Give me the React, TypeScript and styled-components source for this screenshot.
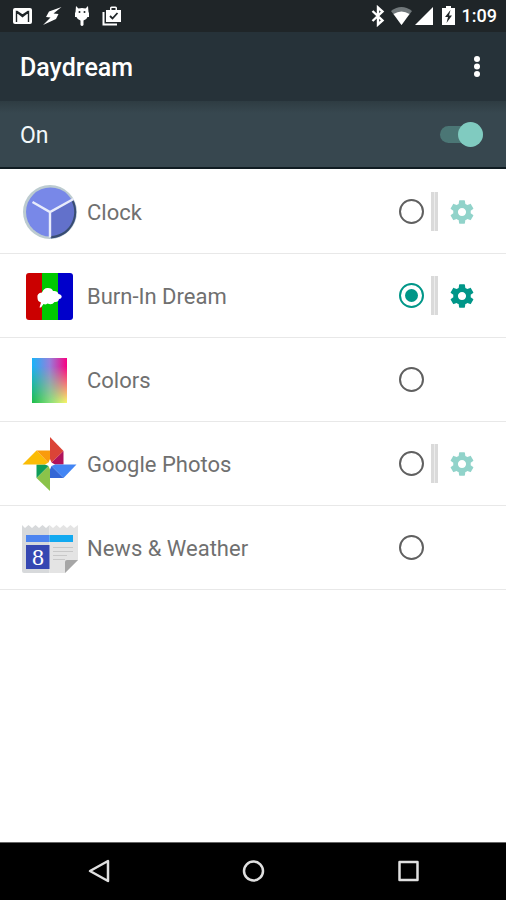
import React, { useState } from "react";
import styled, { createGlobalStyle } from "styled-components";

const GlobalStyle = createGlobalStyle`
  *, *::before, *::after { box-sizing: border-box; }
  body { margin: 0; background: #fff; font-family: Roboto, "Liberation Sans", sans-serif; }
`;

const Screen = styled.div`
  display: flex;
  flex-direction: column;
  min-height: 100vh;
`;

const StatusBar = styled.div`
  display: flex;
  align-items: center;
  justify-content: space-between;
  height: 32px;
  padding: 0 9px 0 12px;
  background: #1f2528;
  color: #fff;
`;

const StatusGroup = styled.div<{ $gap: number }>`
  display: flex;
  align-items: center;
  gap: ${(p) => p.$gap}px;
  svg { display: block; }
`;

const Time = styled.time`
  font-size: 18px;
  line-height: 20px;
  font-weight: 500;
`;

const Header = styled.header`
  display: flex;
  align-items: center;
  justify-content: space-between;
  height: 69px;
  padding: 2px 17px 0 20px;
  background: #263239;
  color: #fff;
`;

const Title = styled.h1`
  margin: 0;
  font-size: 25px;
  line-height: 32px;
  font-weight: 500;
`;

const IconButton = styled.button<{ $color?: string }>`
  display: flex;
  align-items: center;
  justify-content: center;
  padding: 0;
  border: 0;
  background: none;
  color: ${(p) => p.$color ?? "#fff"};
  cursor: pointer;
`;

const MasterRow = styled.label`
  display: flex;
  align-items: center;
  justify-content: space-between;
  height: 68px;
  padding: 0 23px 0 20px;
  border-bottom: 2px solid #101c22;
  background: linear-gradient(#2e3c42, #37474f 12px);
  color: #f2f8fa;
  font-size: 23px;
  line-height: 28px;
`;

const LabelText = styled.span`
  padding-top: 4px;
`;

const Switch = styled.input`
  appearance: none;
  display: grid;
  align-items: center;
  width: 43px;
  height: 25px;
  margin: 0;
  cursor: pointer;
  &::before, &::after {
    content: "";
    grid-area: 1 / 1;
  }
  &::before {
    width: 100%;
    height: 17px;
    border-radius: 9px;
    background: #4b7675;
  }
  &::after {
    justify-self: end;
    width: 25px;
    height: 25px;
    border-radius: 50%;
    background: #80cbc0;
  }
  &:not(:checked)::after { justify-self: start; background: #b9c1c4; }
`;

const List = styled.ul`
  flex: 1;
  margin: 0;
  padding: 1px 0 0;
  list-style: none;
`;

const Row = styled.li`
  display: flex;
  align-items: center;
  height: 84px;
  padding: 0 22px;
  border-bottom: 1px solid #e8e8e8;
`;

const DreamLabel = styled.label`
  flex: 1;
  display: flex;
  align-items: center;
  gap: 9px;
  color: #707070;
  font-size: 22px;
  line-height: 28px;
  svg { display: block; flex: none; }
`;

const DreamName = styled.span`
  padding-top: 2px;
`;

const Radio = styled.input`
  appearance: none;
  display: grid;
  place-items: center;
  width: 25px;
  height: 25px;
  margin: 0;
  border: 2px solid #606060;
  border-radius: 50%;
  cursor: pointer;
  &:checked { border-color: #009688; }
  &:checked::before {
    content: "";
    width: 13px;
    height: 13px;
    border-radius: 50%;
    background: #009688;
  }
`;

const Extras = styled.div`
  display: flex;
  align-items: center;
  gap: 10px;
  width: 60px;
  padding-left: 7px;
`;

const Divider = styled.span`
  width: 7px;
  height: 39px;
  border: solid #dadada;
  border-width: 0 3px;
  background: #ececec;
`;

const NavBar = styled.nav`
  display: grid;
  grid-template-columns: repeat(3, 1fr);
  height: 58px;
  padding: 0 21px 1px;
  border-top: 1px solid #666;
  background: #000;
`;

const ClockIcon = () => (
  <svg width="56" height="56" viewBox="0 0 56 56" aria-hidden="true">
    <circle cx="28" cy="28" r="27" fill="#bccbd0" />
    <circle cx="28.5" cy="28" r="24.5" fill="#7888e8" />
    <path d="M28 28 51 15.500A26 26 0 0 1 28 54Z" fill="#6271cb" />
    <path d="M51 15.500A26.500 26.500 0 0 1 29 54.500L29 52A24 24 0 0 0 50 18Z" fill="#384d70" />
    <path d="M10.500 18 28 28 51.500 15M28 27.500v26" fill="none" stroke="#e8ecfb" strokeWidth="2.400" />
  </svg>
);

const BurnIcon = () => (
  <svg width="56" height="56" viewBox="0 0 56 56" aria-hidden="true">
    <clipPath id="burn"><rect x="4" y="5" width="47" height="47" rx="3" /></clipPath>
    <g clipPath="url(#burn)">
      <path fill="#cb0000" d="M4 5h16v47H4z" />
      <path fill="#00c800" d="M20 5h16v47H20z" />
      <path fill="#0000cb" d="M36 5h15v47H36z" />
    </g>
    <path fill="#fff" d="M17.500 39.500 19 34.500Q15.500 33.500 15.500 30 14.500 25 20 24.500 22 19.500 26 20 30 20 31 23 35.500 22.500 36.500 26 40.500 27 39.500 29.500 38.500 31 37 31 36.500 34.500 32.500 34 30 37.500 25.500 35.500 23.500 37 21.500 36L19 39.500z" />
  </svg>
);

const ColorsIcon = () => (
  <svg width="56" height="56" viewBox="0 0 56 56" aria-hidden="true">
    <defs>
      <linearGradient id="top"><stop offset="0" stopColor="#18b4f8" /><stop offset=".5" stopColor="#9480dc" /><stop offset="1" stopColor="#fa0082" /></linearGradient>
      <linearGradient id="bottom"><stop offset="0" stopColor="#1cbc48" /><stop offset=".5" stopColor="#84e078" /><stop offset="1" stopColor="#f8f868" /></linearGradient>
      <linearGradient id="fade" x1="0" y1="0" x2="0" y2="1"><stop offset=".2" stopColor="#000" /><stop offset="1" stopColor="#fff" /></linearGradient>
      <mask id="lower"><rect x="10" y="5" width="35" height="46" fill="url(#fade)" /></mask>
    </defs>
    <rect x="10" y="6" width="35" height="45" fill="url(#top)" />
    <rect x="10" y="6" width="35" height="45" fill="url(#bottom)" mask="url(#lower)" />
  </svg>
);

const PhotosIcon = () => (
  <svg width="56" height="56" viewBox="0 0 56 56" aria-hidden="true">
    <path fill="#db4437" d="M28 1 41.500 15 28 28z" />
    <path fill="#b0125b" d="M41.500 15v13.500H28V28z" />
    <path fill="#4285f4" d="M54.500 28.500 41.500 42 28 28.500z" />
    <path fill="#3367d6" d="M41.500 42H28V28.500z" />
    <path fill="#8bc34a" d="M28 55 14.500 42 28 28.500z" />
    <path fill="#0f9d58" d="M14.500 42V28.500H28z" />
    <path fill="#fbbc05" d="M.5 28.500 14.500 14.500 28 28.500z" />
    <path fill="#f99b0c" d="M14.500 14.500H28v14z" />
    <path fill="#fff" d="m28 23 1.500 3.500 3.500 2-3.500 1.500-1.500 3.500-1.500-3.500-3.500-1.500 3.500-2z" />
  </svg>
);

const NewsIcon = () => (
  <svg width="56" height="56" viewBox="0 0 56 56" aria-hidden="true">
    <path fill="#d7d9db" d="M0 5l3 3 3.500-3L10 8l3.500-3L17 8l3.500-3L24 8l3.500-3v48H2q-2 0-2-2z" />
    <path fill="#e4e4e4" d="M27.500 5 31 8l3.500-3L38 8l3.500-3L45 8l3.500-3L52 8l4-3v35L43 53H27.500z" />
    <path fill="#4c84f0" d="M4 15h23.500v7H4z" />
    <path fill="#12a9f0" d="M27.500 15H51v7H27.500z" />
    <path fill="#3547b2" d="M4 25h23.500v24H4z" />
    <path stroke="#c8c8c8" d="M31 27.500h20M31 31.500h20M31 35.500h14M31 39.500h12" />
    <path fill="#a6a6a6" d="M43 53V42q0-2 2-2h11z" />
    <text x="16" y="45" fill="#fff" fontFamily="Liberation Serif, serif" fontSize="24" textAnchor="middle">8</text>
  </svg>
);

const Gear = () => (
  <svg width="28" height="28" viewBox="0 0 24 24" fill="currentColor" aria-hidden="true">
    <path d="M19.430 12.980c.04-.32.07-.64.07-.98s-.03-.66-.07-.98l2.110-1.650c.19-.15.24-.42.12-.64l-2-3.460c-.12-.22-.39-.3-.61-.22l-2.490 1c-.52-.4-1.080-.73-1.690-.98l-.38-2.650A.488.488 0 0 0 14 2h-4c-.25 0-.46.18-.49.42l-.38 2.650c-.61.25-1.170.59-1.690.98l-2.490-1c-.23-.09-.49 0-.61.22l-2 3.460c-.13.22-.07.49.12.64l2.110 1.650c-.04.32-.07.65-.07.98s.03.66.07.98l-2.110 1.650c-.19.15-.24.42-.12.64l2 3.460c.12.22.39.3.61.22l2.490-1c.52.4 1.080.73 1.690.98l.38 2.650c.03.24.24.42.49.42h4c.25 0 .46-.18.49-.42l.38-2.650c.61-.25 1.170-.59 1.690-.98l2.490 1c.23.09.49 0 .61-.22l2-3.460c.12-.22.07-.49-.12-.64zM12 15.500c-1.930 0-3.500-1.570-3.500-3.500s1.570-3.500 3.500-3.500 3.500 1.570 3.500 3.500-1.570 3.500-3.500 3.500z" />
  </svg>
);

const dreams = [
  { name: "Clock", Icon: ClockIcon, settings: true },
  { name: "Burn-In Dream", Icon: BurnIcon, settings: true },
  { name: "Colors", Icon: ColorsIcon, settings: false },
  { name: "Google Photos", Icon: PhotosIcon, settings: true },
  { name: "News & Weather", Icon: NewsIcon, settings: false },
];

export default function App() {
  const [on, setOn] = useState(true);
  const [selected, setSelected] = useState("Burn-In Dream");

  return (
    <Screen>
      <GlobalStyle />
      <StatusBar>
        <StatusGroup $gap={10}>
          <svg width="20" height="22" viewBox="0 0 20 22" aria-hidden="true">
            <rect x="1" y="3" width="19" height="16" rx="2" fill="#fff" />
            <path d="M4.500 17V7l6 4.500 6-4.500v10M4.500 6l6 4 6-4" fill="none" stroke="#1f2528" strokeWidth="1.400" />
          </svg>
          <svg width="20" height="22" viewBox="0 0 20 22" aria-hidden="true">
            <path fill="#fff" d="M19.500 2 7 6.500 4 12l4.500.5L1 20l13-6 2.500-5-5-.5z" />
          </svg>
          <svg width="20" height="22" viewBox="0 0 20 22" aria-hidden="true">
            <path fill="#fff" d="M4 1 6.500 3.500q3.500-1 7 0L16 1l.5 6 .5 1v4h-1.500q-1 3-4 3.500V20q-1.500 2-3 0v-4.500q-3-.5-4-3.500H3V8l.5-1z" />
            <circle cx="7.500" cy="7" r="1" fill="#1f2528" /><circle cx="12.500" cy="7" r="1" fill="#1f2528" />
          </svg>
          <svg width="20" height="22" viewBox="0 0 20 22" aria-hidden="true">
            <path d="M1.500 7v12.500H15" fill="none" stroke="#fff" strokeWidth="2" />
            <path fill="#fff" fillRule="evenodd" d="M4 5h4V3q0-1.500 1.500-1.500h4Q15 1.500 15 3v2h4v12H4zM9.500 5h4V3h-4z" />
            <path d="m8 11 2.500 2.500L15.500 8" fill="none" stroke="#1f2528" strokeWidth="1.800" />
          </svg>
        </StatusGroup>
        <StatusGroup $gap={2}>
          <svg width="20" height="22" viewBox="0 0 20 22" aria-hidden="true">
            <path d="m4.500 6 10 9.500L10 19.500V2.500l4.500 4L4.500 16" fill="none" stroke="#fff" strokeWidth="2.400" />
          </svg>
          <svg width="22" height="22" viewBox="0 0 22 22" aria-hidden="true">
            <path fill="#71787b" d="M1 6Q11.500-2 22 6L11.500 20z" />
            <path fill="#fff" d="M3.500 9Q11.500 4 19.500 9L11.500 20z" />
          </svg>
          <svg width="20" height="22" viewBox="0 0 20 22" aria-hidden="true"><path fill="#fff" d="M19 2v18H1z" /></svg>
          <svg width="24" height="22" viewBox="0 0 24 22" aria-hidden="true">
            <path fill="#fff" d="M6 3h4V1h5v2h4v17H6z" />
            <path fill="#1f2528" d="M14.500 5 9 12h3l-1.500 6 5.500-7.500h-3z" />
          </svg>
          <Time>1:09</Time>
        </StatusGroup>
      </StatusBar>
      <Header>
        <Title>Daydream</Title>
        <IconButton type="button" aria-label="More options">
          <svg width="24" height="30" viewBox="0 0 24 30" fill="currentColor" aria-hidden="true">
            <circle cx="12" cy="6" r="3" /><circle cx="12" cy="13.500" r="3" /><circle cx="12" cy="21" r="3" />
          </svg>
        </IconButton>
      </Header>
      <MasterRow>
        <LabelText>On</LabelText>
        <Switch type="checkbox" role="switch" checked={on} onChange={(e) => setOn(e.target.checked)} />
      </MasterRow>
      <List>
        {dreams.map(({ name, Icon, settings }) => (
          <Row key={name}>
            <DreamLabel htmlFor={name}><Icon /><DreamName>{name}</DreamName></DreamLabel>
            <Radio type="radio" id={name} name="dream" checked={selected === name} onChange={() => setSelected(name)} />
            <Extras>
              {settings && (
                <>
                  <Divider />
                  <IconButton type="button" aria-label={`${name} settings`} $color={selected === name ? "#009688" : "#91d3ca"}>
                    <Gear />
                  </IconButton>
                </>
              )}
            </Extras>
          </Row>
        ))}
      </List>
      <NavBar>
        <IconButton type="button" aria-label="Back" $color="#e0e0e0">
          <svg width="26" height="26" viewBox="0 0 26 26" fill="none" stroke="currentColor" strokeWidth="2.500" strokeLinejoin="round" aria-hidden="true"><path d="M23 3v20L5 13z" /></svg>
        </IconButton>
        <IconButton type="button" aria-label="Home" $color="#e0e0e0">
          <svg width="26" height="26" viewBox="0 0 26 26" fill="none" stroke="currentColor" strokeWidth="2.500" aria-hidden="true"><circle cx="13.500" cy="13" r="9.500" /></svg>
        </IconButton>
        <IconButton type="button" aria-label="Recent apps" $color="#e0e0e0">
          <svg width="26" height="26" viewBox="0 0 26 26" fill="none" stroke="currentColor" strokeWidth="2.500" strokeLinejoin="round" aria-hidden="true"><path d="M4.500 4h18v18h-18z" /></svg>
        </IconButton>
      </NavBar>
    </Screen>
  );
}
